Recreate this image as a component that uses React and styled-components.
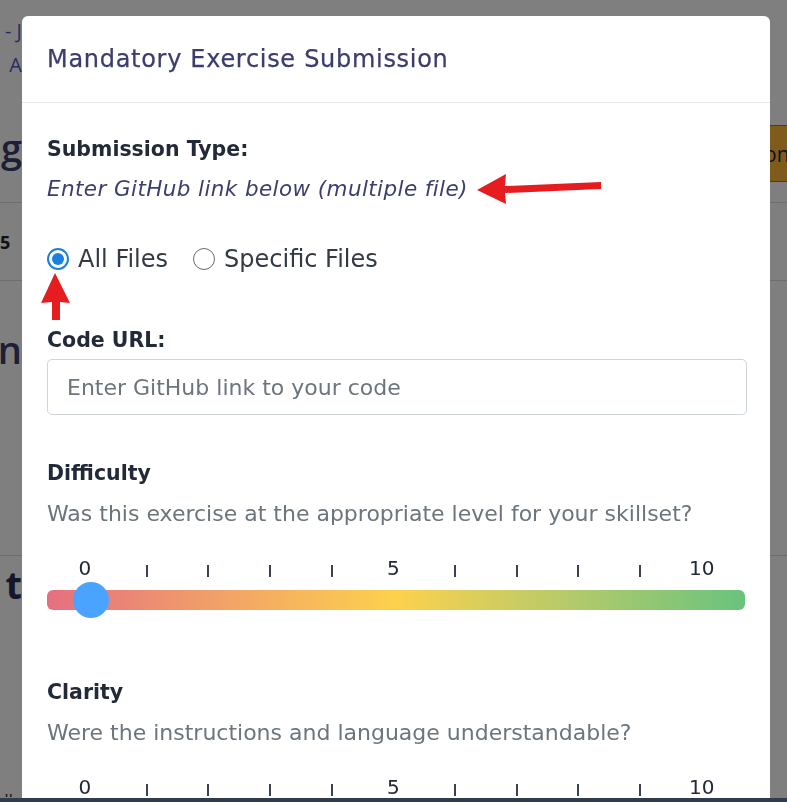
import React from 'react';
import styled, { createGlobalStyle } from 'styled-components';

const Global = createGlobalStyle`
  html, body { margin: 0; padding: 0; background: #ffffff; }
  body { font-family: "DejaVu Sans", "Open Sans", sans-serif; overflow: hidden; }
  * { box-sizing: border-box; }
`;

// page behind the dialog
const Page = styled.div`
  display: grid;
  grid-template-columns: 22px 1fr 17px;
  grid-template-rows: 44px 40px 119px 78px 275px 238px 1fr;
  height: 802px;
  width: 787px;
`;

const Cell = styled.div`
  grid-column: ${p => p.col || 'auto'};
  grid-row: ${p => p.row};
  display: flex;
  align-items: ${p => p.align || 'center'};
  justify-content: ${p => p.justify || 'flex-end'};
  overflow: hidden;
  white-space: nowrap;
`;

const Line = styled.div`
  grid-column: 1 / 4;
  grid-row: ${p => p.row};
  border-bottom: 1px solid #dcdcdc;
`;

const BgText = styled.span`
  font-family: "Open Sans", sans-serif;
  font-size: ${p => p.size}px;
  font-weight: ${p => p.weight || 400};
  color: ${p => p.color || '#3c3e6b'};
  padding-top: ${p => p.pt || 0}px;
`;

const BgButton = styled.div`
  width: 60px;
  height: 57px;
  margin-top: 41px;
  align-self: flex-start;
  background: #ffb638;
  border-top: 1px solid #e0503c;
  border-bottom: 1px solid #e0503c;
  display: flex;
  align-items: center;
  font-family: "Open Sans", sans-serif;
  font-size: 21px;
  color: #1c2433;
  flex-shrink: 0;
  margin-left: -6px;
`;

const Shade = styled.div`
  position: fixed;
  inset: 0;
  background: rgba(0, 0, 0, 0.5);
`;

const Dialog = styled.div`
  position: fixed;
  top: 16px;
  left: 22px;
  width: 748px;
  height: 900px;
  background: #ffffff;
  border-radius: 6px;
  overflow: hidden;
`;

const Header = styled.div`
  height: 87px;
  padding: 0 25px;
  display: flex;
  align-items: center;
  border-bottom: 1px solid #e9e9e9;
`;

const Title = styled.h5`
  margin: 0;
  font-size: 24px;
  font-weight: 400;
  color: #3b3d6c;
  letter-spacing: 0.7px;
  -webkit-text-stroke: 0.25px #3b3d6c;
`;

const Body = styled.div`
  padding: 33px 24px 0 25px;
  display: flex;
  flex-direction: column;
`;

const Label = styled.div`
  font-size: 20.5px;
  font-weight: 700;
  color: #222a38;
  line-height: 26px;
  margin-top: ${p => p.mt || 0}px;
`;

const Hint = styled.div`
  font-size: 21.5px;
  font-style: italic;
  color: #3c3f6e;
  line-height: 26px;
  margin-top: 11px;
  display: flex;
  align-items: center;
  gap: 8px;
  letter-spacing: 0.4px;
`;

const RadioRow = styled.div`
  display: flex;
  align-items: center;
  height: 28px;
  margin-top: 40px;
  position: relative;
`;

const RadioLabel = styled.label`
  display: flex;
  align-items: center;
  gap: 9px;
  font-size: 24px;
  color: #333a44;
  margin-right: 25px;
`;

const Circle = styled.span`
  width: 22px;
  height: 22px;
  border-radius: 50%;
  border: ${p => (p.on ? '2px solid #1a7fe0' : '1.5px solid #6b6b6b')};
  display: flex;
  align-items: center;
  justify-content: center;
  &::after {
    content: '';
    display: ${p => (p.on ? 'block' : 'none')};
    width: 12px;
    height: 12px;
    border-radius: 50%;
    background: #1a7fe0;
  }
`;

const UpArrow = styled.svg`
  position: absolute;
  left: -6px;
  top: 28px;
`;

const Input = styled.input`
  margin-top: 6px;
  height: 56px;
  width: 700px;
  border: 1px solid #ced4da;
  border-radius: 5px;
  padding: 0 19px;
  font-family: "DejaVu Sans", sans-serif;
  font-size: 22px;
  color: #333;
  outline: none;
  &::placeholder { color: #6c757d; }
`;

const Desc = styled.div`
  font-size: 22px;
  color: #6c757d;
  line-height: 28px;
  margin-top: 14px;
`;

const Scale = styled.div`
  display: grid;
  grid-template-columns: repeat(11, 61.7px);
  margin: 26px 0 0 7px;
  height: 28px;
  align-items: center;
`;

const Mark = styled.div`
  text-align: center;
  font-size: 20px;
  color: #222a38;
  line-height: 24px;
`;

const Tick = styled.div`
  justify-self: center;
  width: 2px;
  height: 12px;
  margin-top: 6px;
  background: #3a4150;
`;

const Track = styled.div`
  position: relative;
  margin-top: 8px;
  width: 698px;
  height: 20px;
  border-radius: 6px;
  background: linear-gradient(to right, #e56f80 0%, #f3a865 28%, #fdd14d 50%, #bdcb68 72%, #69c37e 100%);
`;

const Thumb = styled.div`
  position: absolute;
  top: -8px;
  left: 26px;
  width: 36px;
  height: 36px;
  border-radius: 50%;
  background: #4aa3ff;
`;

const BottomBar = styled.div`
  position: fixed;
  left: 0;
  right: 0;
  bottom: 0;
  height: 4px;
  background: #2e3c4c;
`;

function Rating({ title, question, mt }) {
  const items = [];
  for (let i = 0; i <= 10; i++) {
    if (i % 5 === 0) items.push(<Mark key={i}>{i}</Mark>);
    else items.push(<Tick key={i} />);
  }
  return (
    <>
      <Label mt={mt}>{title}</Label>
      <Desc>{question}</Desc>
      <Scale>{items}</Scale>
      <Track><Thumb /></Track>
    </>
  );
}

export default function App() {
  return (
    <>
      <Global />
      <Page>
        <Cell col="1" row="1" align="flex-end"><BgText size={20} color="#4a5dbf">- J</BgText></Cell>
        <Cell col="1" row="2"><BgText size={20} color="#4a5dbf">A</BgText></Cell>
        <Cell col="1" row="3"><BgText size={38} weight={600} color="#3a3d6e" pt={6}>g</BgText></Cell>
        <Cell col="3" row="3" justify="flex-start"><BgButton>on</BgButton></Cell>
        <Line row="3" />
        <Cell col="1" row="4" justify="flex-start"><BgText size={18} weight={700} color="#222">5</BgText></Cell>
        <Line row="4" />
        <Cell col="1" row="5" align="flex-start"><BgText size={38} weight={600} color="#3a3d6e" pt={42}>n</BgText></Cell>
        <Line row="5" />
        <Cell col="1" row="6" align="flex-start"><BgText size={38} weight={700} color="#2a2d4e" pt={2}>t</BgText></Cell>
        <Cell col="1" row="7" align="flex-end"><BgText size={16} color="#222">ll -</BgText></Cell>
      </Page>
      <Shade />
      <Dialog>
        <Header>
          <Title>Mandatory Exercise Submission</Title>
        </Header>
        <Body>
          <Label>Submission Type:</Label>
          <Hint>
            Enter GitHub link below (multiple file)
            <svg width="126" height="32" viewBox="0 0 126 32">
              <polygon points="1,17 30,1 29,13 125,9 125,16 29,20 30,31" fill="#e51d20" />
            </svg>
          </Hint>
          <RadioRow>
            <RadioLabel><Circle on />All Files</RadioLabel>
            <RadioLabel><Circle />Specific Files</RadioLabel>
            <UpArrow width="30" height="48" viewBox="0 0 30 48">
              <polygon points="14,0 29,30 19,29 19,47 11,47 11,29 0,30" fill="#e51d20" />
            </UpArrow>
          </RadioRow>
          <Label mt={54}>Code URL:</Label>
          <Input placeholder="Enter GitHub link to your code" />
          <Rating mt={45} title="Difficulty" question="Was this exercise at the appropriate level for your skillset?" />
          <Rating mt={69} title="Clarity" question="Were the instructions and language understandable?" />
        </Body>
      </Dialog>
      <BottomBar />
    </>
  );
}
